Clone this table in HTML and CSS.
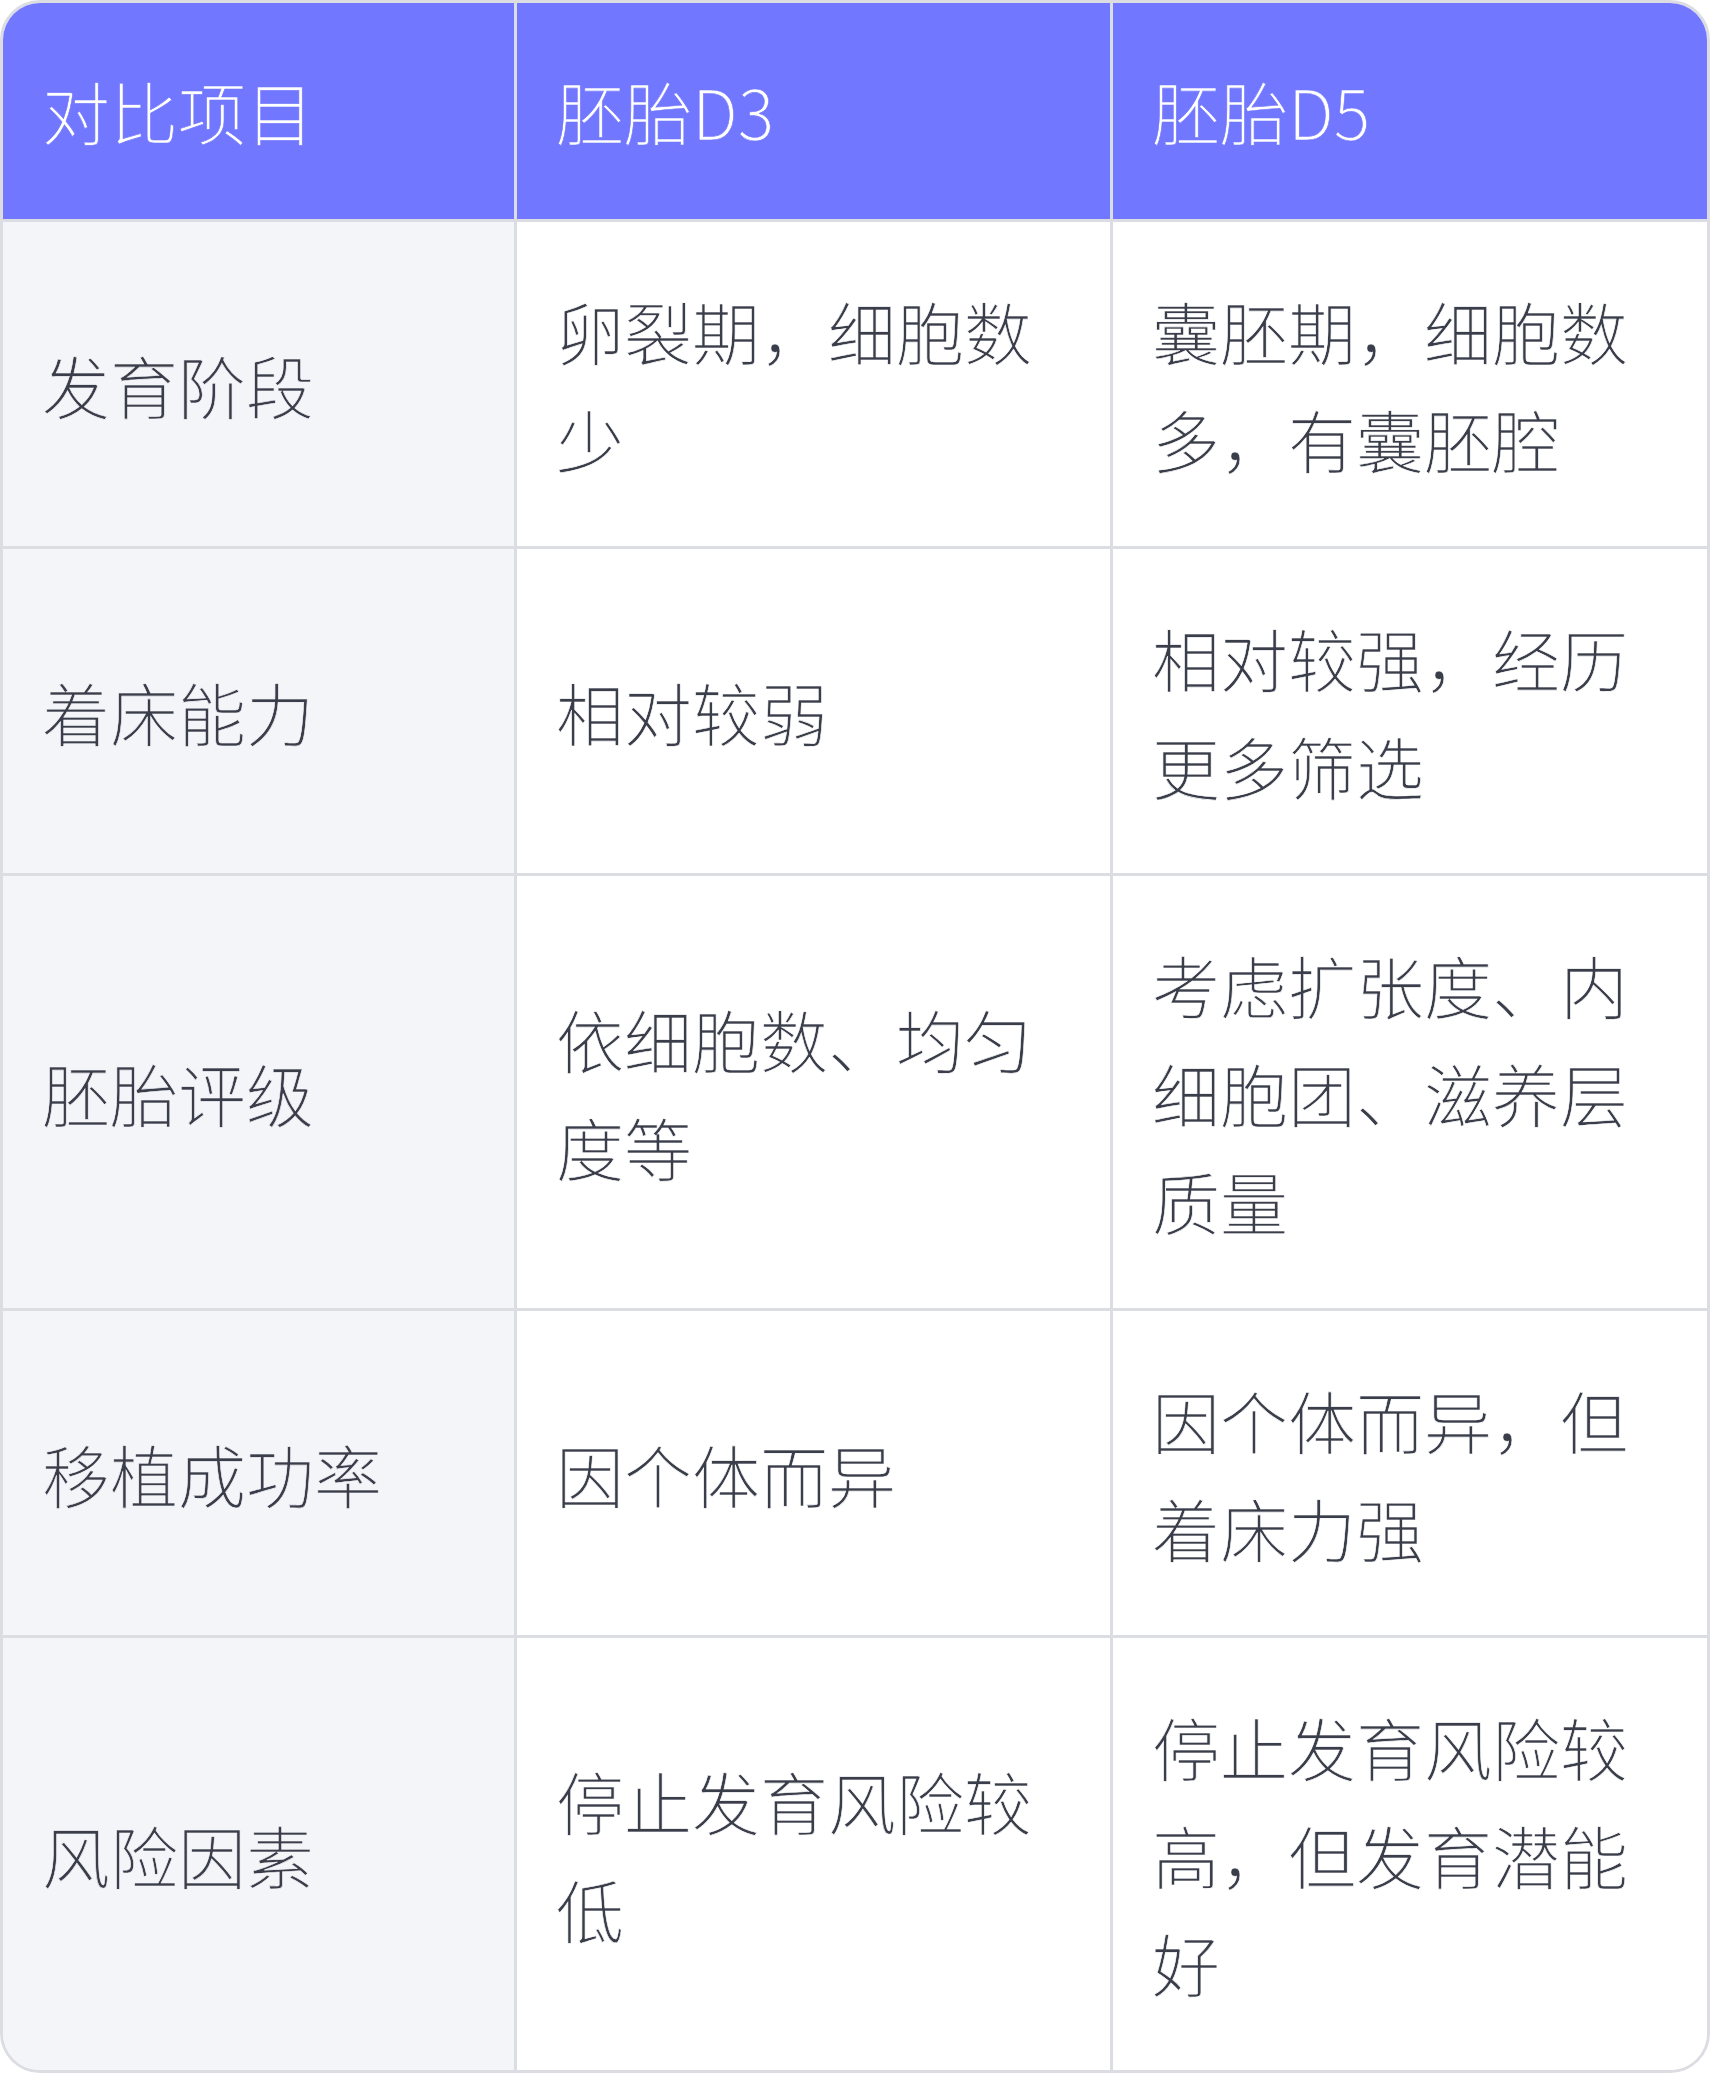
FILE: index.html
```html
<!DOCTYPE html>
<html lang="zh-CN">
<head>
<meta charset="utf-8">
<title>胚胎D3与D5对比</title>
<link rel="stylesheet" href="styles.css">
</head>
<body>
<div class="card">
  <table class="compare">
    <colgroup>
      <col class="c-item">
      <col class="c-d3">
      <col class="c-d5">
    </colgroup>
    <thead>
      <tr>
        <th>对比项目</th>
        <th>胚胎D3</th>
        <th>胚胎D5</th>
      </tr>
    </thead>
    <tbody>
      <tr>
        <td class="label">发育阶段</td>
        <td>卵裂期，细胞数少</td>
        <td>囊胚期，细胞数多，有囊胚腔</td>
      </tr>
      <tr>
        <td class="label">着床能力</td>
        <td>相对较弱</td>
        <td>相对较强，经历更多筛选</td>
      </tr>
      <tr>
        <td class="label">胚胎评级</td>
        <td>依细胞数、均匀度等</td>
        <td>考虑扩张度、内细胞团、滋养层质量</td>
      </tr>
      <tr>
        <td class="label">移植成功率</td>
        <td>因个体而异</td>
        <td>因个体而异，但着床力强</td>
      </tr>
      <tr>
        <td class="label">风险因素</td>
        <td>停止发育风险较低</td>
        <td>停止发育风险较高，但发育潜能好</td>
      </tr>
    </tbody>
  </table>
</div>
</body>
</html>
```

FILE: styles.css
```css
html, body {
  margin: 0;
  padding: 0;
  background: #ffffff;
}

.card {
  width: 1710px;
  box-sizing: border-box;
  border: 3px solid #dcdde3;
  border-radius: 40px;
  overflow: hidden;
  background: #ffffff;
}

.compare {
  width: 100%;
  table-layout: fixed;
  border-collapse: separate;
  border-spacing: 0;
  font-family: "Noto Sans CJK SC Light", "Noto Sans CJK SC DemiLight", "Noto Sans CJK SC", "Noto Sans", sans-serif;
  font-weight: 300;
  font-size: 68px;
  line-height: 108px;
  color: #3a3d4a;
}

.c-item { width: 514px; }
.c-d3 { width: 596px; }
.c-d5 { width: auto; }

.compare th,
.compare td {
  padding: 55px 39px 53px;
  text-align: left;
  vertical-align: middle;
  border-right: 3px solid #dcdde3;
  border-bottom: 3px solid #dcdde3;
  word-break: break-all;
  -webkit-text-stroke: 0.6px #ffffff;
}

.compare th {
  padding: 54px 39px;
}

.compare th:last-child,
.compare td:last-child {
  border-right: none;
}

.compare tbody tr:last-child td {
  border-bottom: none;
}

.compare th {
  background: #7177ff;
  color: #ffffff;
  font-weight: 300;
  -webkit-text-stroke: 0.6px #7177ff;
}

.compare td {
  background: #ffffff;
}

.compare td.label {
  background: #f4f5f9;
  -webkit-text-stroke: 0.6px #f4f5f9;
}
```
